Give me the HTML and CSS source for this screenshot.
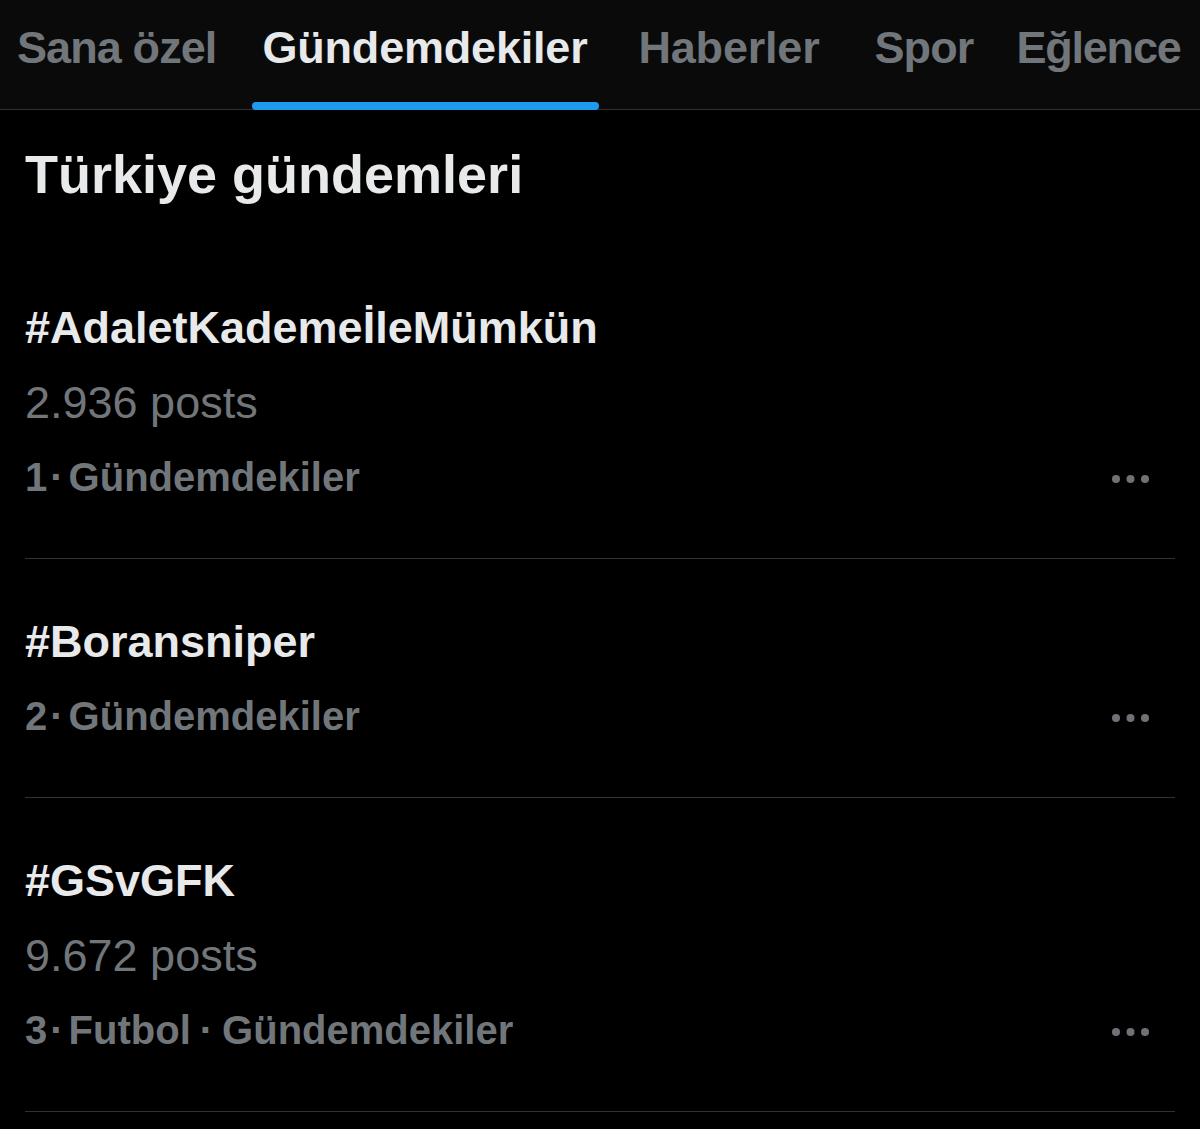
FILE: index.html
```html
<!DOCTYPE html>
<html lang="tr">
<head>
<meta charset="utf-8">
<title>Gündemdekiler</title>
<link rel="stylesheet" href="styles.css">
</head>
<body>
<nav class="tabs">
  <div class="tab tab-narrow"><span class="tab-label">Sana özel</span></div>
  <div class="tab tab-active"><span class="tab-label">Gündemdekiler</span><span class="tab-bar"></span></div>
  <div class="tab tab-after"><span class="tab-label">Haberler</span></div>
  <div class="tab tab-narrow tab-spaced"><span class="tab-label">Spor</span></div>
  <div class="tab tab-narrow tab-last"><span class="tab-label">Eğlence</span></div>
</nav>
<main class="content">
  <h1 class="heading">Türkiye gündemleri</h1>
  <section class="trend">
    <div class="trend-name">#AdaletKademeİleMümkün</div>
    <div class="trend-count">2.936 posts</div>
    <div class="trend-meta">
      <span class="meta-text">1<span class="sep">·</span>Gündemdekiler</span>
      <svg class="more" viewBox="0 0 37 10" width="37" height="10"><circle cx="4" cy="5" r="4"/><circle cx="18.5" cy="5" r="4"/><circle cx="33" cy="5" r="4"/></svg>
    </div>
  </section>
  <section class="trend">
    <div class="trend-name">#Boransniper</div>
    <div class="trend-meta">
      <span class="meta-text">2<span class="sep">·</span>Gündemdekiler</span>
      <svg class="more" viewBox="0 0 37 10" width="37" height="10"><circle cx="4" cy="5" r="4"/><circle cx="18.5" cy="5" r="4"/><circle cx="33" cy="5" r="4"/></svg>
    </div>
  </section>
  <section class="trend">
    <div class="trend-name">#GSvGFK</div>
    <div class="trend-count">9.672 posts</div>
    <div class="trend-meta">
      <span class="meta-text">3<span class="sep">·</span>Futbol<span class="sep sep-wide">·</span>Gündemdekiler</span>
      <svg class="more" viewBox="0 0 37 10" width="37" height="10"><circle cx="4" cy="5" r="4"/><circle cx="18.5" cy="5" r="4"/><circle cx="33" cy="5" r="4"/></svg>
    </div>
  </section>
</main>
</body>
</html>
```
FILE: styles.css
```css
html, body {
  margin: 0;
  padding: 0;
  background: #000;
}
body {
  font-family: "Liberation Sans", Arial, sans-serif;
  color: #e7e9ea;
  width: 1200px;
  height: 1129px;
  overflow: hidden;
}
.tabs {
  display: flex;
  gap: 24px;
  height: 109px;
  padding: 0 0 0 5px;
  background: #0a0a0a;
  border-bottom: 1px solid #2f3336;
}
.tab {
  position: relative;
  padding: 22px 12px 0;
  font-size: 45px;
  font-weight: 700;
  line-height: 52px;
  color: #71767b;
  letter-spacing: -0.2px;
  white-space: nowrap;
}
.tab-narrow {
  letter-spacing: -0.9px;
}
.tab-after {
  margin-left: 3px;
}
.tab-spaced {
  margin-left: 7px;
}
.tab-last {
  margin-left: -5px;
  letter-spacing: -1.2px;
}
.tab-active {
  color: #e7e9ea;
  padding-left: 10px;
}
.tab-bar {
  position: absolute;
  left: 0;
  right: 0;
  bottom: -1px;
  height: 8px;
  border-radius: 4px;
  background: #1d9bf0;
}
.content {
  padding: 0 25px;
}
.heading {
  margin: 0;
  padding: 32px 0 39px;
  font-size: 54px;
  font-weight: 700;
  line-height: 64px;
  color: #e7e9ea;
}
.trend {
  padding: 45px 0 43px;
  border-bottom: 1px solid #2f3336;
}
.trend-name {
  font-size: 45px;
  font-weight: 700;
  line-height: 75px;
  color: #e7e9ea;
}
.trend-count {
  font-size: 45px;
  line-height: 75px;
  color: #71767b;
}
.trend-meta {
  display: flex;
  align-items: center;
  justify-content: space-between;
  height: 75px;
}
.meta-text {
  font-size: 40px;
  font-weight: 700;
  line-height: 75px;
  color: #71767b;
}
.sep {
  margin: 0 5px 0 3px;
}
.sep-wide {
  margin: 0 9px 0 9px;
}
.more {
  fill: #6e7276;
  margin-right: 26px;
  margin-top: 3px;
}
```
